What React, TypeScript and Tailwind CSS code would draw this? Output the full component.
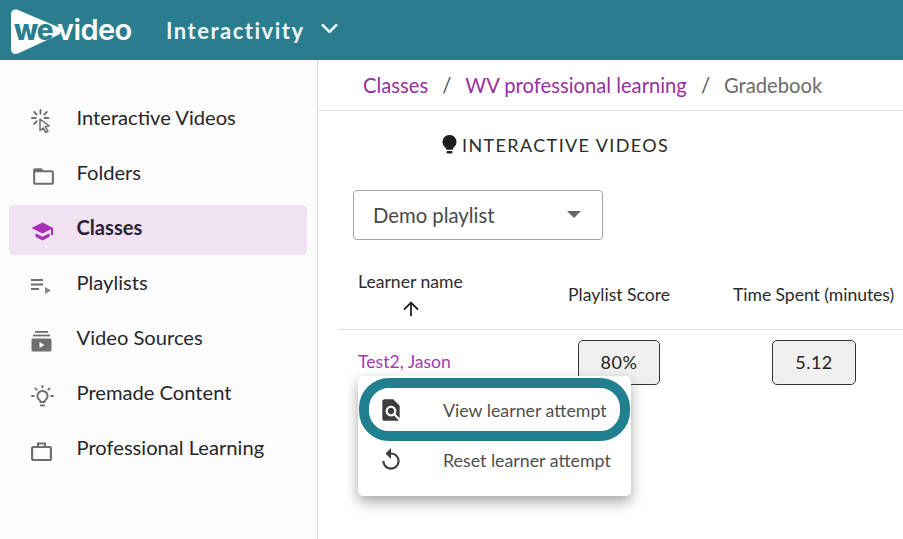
import React from "react";
import { ChevronDown, ArrowUp } from "lucide-react";

const lato = "font-['Lato','Open_Sans',sans-serif]";

function ClickIcon() {
  return (
    <svg width="22" height="25" viewBox="0 0 22 25" fill="none" stroke="#6f6f6f" strokeWidth="1.9" strokeLinecap="round">
      <path d="M9.500 1v3.800M1 9h3.800M3.200 3l2.500 2.500M15.800 3l-2.500 2.500M13.500 9h3.800M5.700 12.300l-2.500 2.500" />
      <path d="M9 10l9.200 6.800-3.900 1 2.700 4.400-2.100 1.300-2.700-4.500-3.200 2.500z" strokeLinejoin="round" strokeWidth="1.5" />
    </svg>
  );
}

function FolderIcon() {
  return (
    <svg width="25" height="25" viewBox="0 0 24 24" fill="#6f6f6f">
      <path d="M20 6h-8l-2-2H4c-1.100 0-1.990.9-1.990 2L2 18c0 1.100.9 2 2 2h16c1.100 0 2-.9 2-2V8c0-1.100-.9-2-2-2zm0 12H4V8h16v10z" />
    </svg>
  );
}

function CapIcon() {
  return (
    <svg width="23" height="19" viewBox="0 0 23 19" fill="#a62fb4">
      <path d="M11.500 0.500L0.500 6l11 5.500L20 7.200V13h2V6z" />
      <path d="M4.500 11.200v3.600l7 3.700 7-3.700v-3.600l-7 3.500z" />
    </svg>
  );
}

function PlaylistIcon() {
  return (
    <svg width="20" height="15" viewBox="0 0 20 15" fill="#6f6f6f">
      <rect x="0" y="0" width="12" height="2" />
      <rect x="0" y="4.500" width="12" height="2" />
      <rect x="0" y="9" width="8" height="2" />
      <path d="M14 8l6 3.500-6 3.500z" fill="#8a8a8a" />
    </svg>
  );
}

function SourcesIcon() {
  return (
    <svg width="21" height="21" viewBox="0 0 21 21" fill="#6f6f6f">
      <rect x="4" y="0" width="13" height="1.800" />
      <rect x="2" y="3.600" width="17" height="1.800" />
      <path d="M2 7.500h17a1.500 1.500 0 0 1 1.500 1.500v10a1.500 1.500 0 0 1-1.500 1.500H2A1.500 1.500 0 0 1 .5 19V9A1.500 1.500 0 0 1 2 7.500z" />
      <path d="M8.500 11l5 3-5 3z" fill="#fcfcfc" />
    </svg>
  );
}

function BulbIcon() {
  return (
    <svg width="23" height="23" viewBox="0 0 23 23" fill="none" stroke="#6f6f6f" strokeWidth="1.9" strokeLinecap="round">
      <path d="M11.500 6a5 5 0 0 0-3 9c.7.6 1 1.200 1 2h4c0-.8.3-1.400 1-2a5 5 0 0 0-3-9z" />
      <path d="M10 20.500h3" strokeWidth="2.200" />
      <path d="M11.500 1v1.500M4.500 3.500l1.200 1.200M18.500 3.500l-1.200 1.200M1 11h1.800M20.200 11H22" />
    </svg>
  );
}

function CaseIcon() {
  return (
    <svg width="21" height="19" viewBox="0 0 21 19" fill="none" stroke="#6f6f6f" strokeWidth="2.200">
      <rect x="1.100" y="5" width="18.800" height="13" rx="1" />
      <path d="M7 5V1.500h7V5" />
    </svg>
  );
}

function FindInPageIcon() {
  return (
    <svg width="26" height="26" viewBox="0 0 24 24" fill="#3d3d3d">
      <path d="M20 19.590V8l-6-6H6c-1.100 0-1.990.9-1.990 2L4 20c0 1.100.89 2 1.990 2H18c.45 0 .85-.15 1.190-.4l-4.430-4.430c-.8.52-1.740.83-2.760.83-2.760 0-5-2.240-5-5s2.240-5 5-5 5 2.240 5 5c0 1.020-.31 1.960-.83 2.750L20 19.590zM9 13c0 1.660 1.340 3 3 3s3-1.340 3-3-1.340-3-3-3-3 1.340-3 3z" />
    </svg>
  );
}

function ReplayIcon() {
  return (
    <svg width="26" height="26" viewBox="0 0 24 24" fill="#3d3d3d">
      <path d="M12 5V1L7 6l5 5V7c3.310 0 6 2.690 6 6s-2.690 6-6 6-6-2.690-6-6H4c0 4.420 3.580 8 8 8s8-3.580 8-8-3.580-8-8-8z" />
    </svg>
  );
}

const navItems = [
  { label: "Interactive Videos", icon: <ClickIcon /> },
  { label: "Folders", icon: <FolderIcon /> },
  { label: "Classes", icon: <CapIcon />, active: true },
  { label: "Playlists", icon: <PlaylistIcon /> },
  { label: "Video Sources", icon: <SourcesIcon /> },
  { label: "Premade Content", icon: <BulbIcon /> },
  { label: "Professional Learning", icon: <CaseIcon /> },
];

export default function App() {
  return (
    <div className={`${lato} w-[903px] h-[539px] overflow-hidden bg-white flex flex-col`}>
      {/* Top bar */}
      <header className="h-[60px] shrink-0 bg-[#2a7d8f] flex items-center text-white">
        <div className="relative w-[166px] h-[60px] shrink-0">
          <svg className="absolute left-[11px] top-[9px]" width="50" height="46" viewBox="0 0 50 46">
            <path d="M0 5C0 1.500 3 -0.500 6.500 0.800L47 18c3.500 2 3.500 6 0 8L7 44.500C3 46 0 44 0 40z" fill="#fff" />
          </svg>
          <span className="absolute left-[14px] top-[7px] text-[28px] leading-[46px] font-extrabold tracking-[-1px] text-[#2a7d8f] font-['Inter',sans-serif]">
            we
          </span>
          <span className="absolute left-[57px] top-[7px] text-[29px] leading-[46px] font-semibold tracking-[-0.6px] text-white font-['Inter',sans-serif]">
            video
          </span>
        </div>
        <span className="text-[22px] font-bold tracking-[1.5px] text-[#eef5f6]">Interactivity</span>
        <ChevronDown className="ml-[11px] mb-[3px]" size={27} strokeWidth={2.4} color="#eef5f6" />
      </header>

      <div className="flex flex-1 min-h-0">
        {/* Sidebar */}
        <aside className="w-[318px] shrink-0 bg-[#fcfcfc] border-r border-[#dedede] pt-[35px] pl-[9px] pr-[10px] flex flex-col gap-[5px]">
          {navItems.map((item) => (
            <div
              key={item.label}
              className={`h-[50px] flex items-center rounded-[5px] ${item.active ? "bg-[#f1e2f3]" : ""}`}
            >
              <div className="w-[67.500px] h-[26px] mt-[2px] pl-[22px] flex items-center shrink-0">{item.icon}</div>
              <span className={`text-[20.150px] leading-none mb-[6px] ${item.active ? "font-bold text-[#2c2233]" : "text-[#26262b]"}`}>
                {item.label}
              </span>
            </div>
          ))}
        </aside>

        {/* Main */}
        <main className="relative flex-1 min-w-0">
          <nav className="h-[51px] border-b border-[#e2e2e2] flex items-center pl-[45px] pt-[1px] text-[20.200px] whitespace-nowrap">
            <span className="text-[#98309f]">Classes</span>
            <span className="mx-[14px] text-[#555]">/</span>
            <span className="text-[#98309f]">WV professional learning</span>
            <span className="mx-[14px] text-[#555]">/</span>
            <span className="text-[#6c6c6c]">Gradebook</span>
          </nav>

          <div className="pl-[124px] pt-[22px] flex items-center text-[18px] leading-[24px] tracking-[1.38px] text-[#2b2b2b] whitespace-nowrap">
            <svg className="mr-[5px]" width="15" height="20" viewBox="0 0 15 20" fill="#1f1f1f">
              <path d="M7.500 0a7 7 0 0 0-4.500 12.300c.8.800 1.200 1.500 1.300 2.400h6.400c.1-.9.500-1.600 1.300-2.400A7 7 0 0 0 7.500 0z" />
              <rect x="4.500" y="16" width="6" height="2.400" rx="1" />
            </svg>
            INTERACTIVE VIDEOS
          </div>

          <div className="ml-[35px] mt-[33px] w-[250px] h-[50px] border border-[#a5a5a5] rounded-[4px] flex items-center justify-between pl-[19px] pr-[21px]">
            <span className="text-[20.300px] text-[#4a4a4a]">Demo playlist</span>
            <span className="mb-[2px] w-0 h-0 border-l-[7.500px] border-r-[7.500px] border-t-[7px] border-l-transparent border-r-transparent border-t-[#666]" />
          </div>

          {/* Table */}
          <div className="ml-[20px] mt-[22px] h-[68px] border-b border-[#e0e0e0] flex text-[#2b2b2b] text-[17.600px] whitespace-nowrap">
            <div className="w-[146px] pl-[20px] flex flex-col">
              <span className="leading-[24px] mt-[8px]">Learner name</span>
              <ArrowUp className="ml-[42px] mt-[4px]" size={22} strokeWidth={2} color="#222" />
            </div>
            <div className="w-[165px] pl-[84px] flex">
              <span className="leading-[24px] mt-[21px]">Playlist Score</span>
            </div>
            <div className="pl-[84px]">
              <span className="block leading-[24px] mt-[21px] tracking-[-0.05px]">Time Spent (minutes)</span>
            </div>
          </div>

          <div className="ml-[20px] flex items-start">
            <div className="w-[240px] pl-[20px] pt-[20px] text-[17.600px] leading-[24px] text-[#a23cae]">Test2, Jason</div>
            <div className="w-[82px] h-[45px] mt-[10px] bg-[#f0f0f0] border border-[#333] rounded-[5px] flex items-center justify-center text-[18px] tracking-[0.5px] text-[#222]">
              80%
            </div>
            <div className="ml-[112px] w-[84px] h-[45px] mt-[10px] bg-[#f0f0f0] border border-[#333] rounded-[5px] flex items-center justify-center text-[18px] tracking-[0.5px] text-[#222]">
              5.12
            </div>
          </div>

          {/* Context menu */}
          <div className="absolute left-[40px] top-[316px] w-[273px] h-[120px] bg-white rounded-[5px] shadow-[0_6px_14px_rgba(0,0,0,0.35)] text-[17.800px] text-[#4f4f4f]">
            <div className="absolute left-[1px] top-[2px] w-[271px] h-[63px] rounded-[30px] border-[10px] border-[#21808f]" />
            <div className="absolute left-[20px] top-[21px] flex items-center whitespace-nowrap">
              <FindInPageIcon />
              <span className="ml-[39px] leading-[20px]">View learner attempt</span>
            </div>
            <div className="absolute left-[20px] top-[71px] flex items-center whitespace-nowrap">
              <ReplayIcon />
              <span className="ml-[39px] leading-[20px]">Reset learner attempt</span>
            </div>
          </div>
        </main>
      </div>
    </div>
  );
}
